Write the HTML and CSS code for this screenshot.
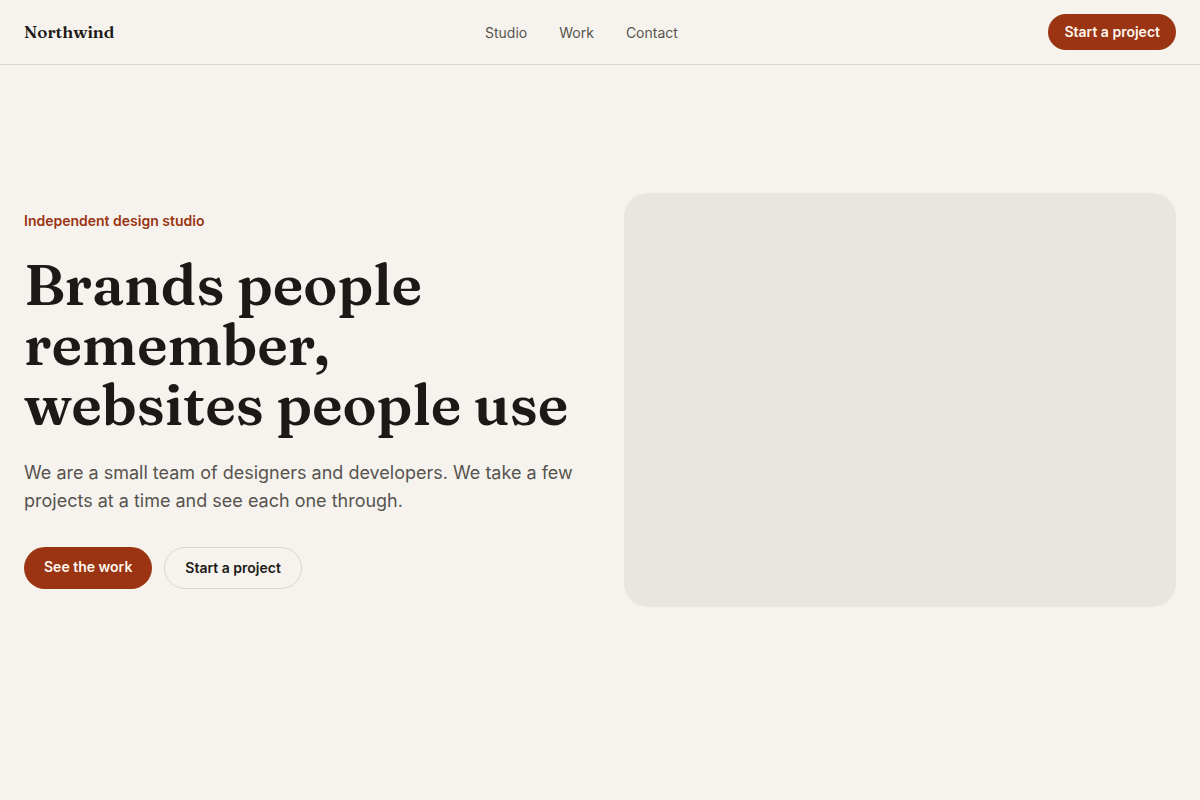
FILE: index.html
```html
<!DOCTYPE html>
<html lang="en">
<head>
<meta charset="utf-8">
<meta name="viewport" content="width=device-width, initial-scale=1">
<title>Northwind</title>
<link rel="stylesheet" href="styles.css">
</head>
<body>
<header class="header">
  <a class="brand" href="#">Northwind</a>
  <nav aria-label="Main">
    <ul class="nav">
      <li><a class="nav-link" href="#studio">Studio</a></li>
      <li><a class="nav-link" href="#work">Work</a></li>
      <li><a class="nav-link" href="#contact">Contact</a></li>
    </ul>
  </nav>
  <a class="button button-primary button-small" href="#contact">Start a project</a>
</header>
<main class="hero">
  <div class="copy">
    <p class="eyebrow">Independent design studio</p>
    <h1 class="title">Brands people remember, websites people use</h1>
    <p class="lead">We are a small team of designers and developers. We take a few projects at a time and see each one through.</p>
    <div class="actions">
      <a class="button button-primary" href="#work">See the work</a>
      <a class="button button-outline" href="#contact">Start a project</a>
    </div>
  </div>
  <div class="media"></div>
</main>
</body>
</html>
```
FILE: styles.css
```css
*, *::before, *::after { box-sizing: border-box; }

body {
  margin: 0;
  background: #f6f3ee;
  color: #1c1917;
  font-family: Inter, sans-serif;
  font-size: 16px;
  line-height: 24px;
}

a { color: inherit; text-decoration: none; }
h1, p, ul { margin: 0; }

.header {
  display: flex;
  align-items: center;
  justify-content: space-between;
  padding: 14px 24px;
  border-bottom: 1px solid #ddd6c8;
}

.brand {
  font-family: Fraunces, "Liberation Serif", serif;
  font-size: 17px;
  font-weight: 600;
}

.nav {
  display: flex;
  gap: 32px;
  padding: 0;
  list-style: none;
}

.nav-link {
  color: #57534e;
  font-size: 14px;
}

.button {
  display: block;
  padding: 10px 20px;
  border-radius: 999px;
  font-size: 14px;
  font-weight: 600;
  line-height: 20px;
}

.button-primary { background: #9a3412; color: #fff7ed; }
.button-small { padding: 8px 16px; }
.button-outline { border: 1px solid #ddd6c8; }

.hero {
  display: grid;
  grid-template-columns: 1fr 1fr;
  gap: 48px;
  align-items: center;
  padding: 128px 24px;
}

.eyebrow {
  color: #9a3412;
  font-size: 14px;
  font-weight: 600;
  line-height: 20px;
}

.title {
  margin-top: 24px;
  font-family: Fraunces, "Liberation Serif", serif;
  font-size: 57px;
  font-weight: 600;
  line-height: 60px;
}

.lead {
  margin-top: 24px;
  color: #57534e;
  font-size: 18px;
  line-height: 28px;
}

.actions { display: flex; gap: 12px; margin-top: 32px; }

.media {
  aspect-ratio: 4 / 3;
  border-radius: 24px;
  background: #e9e6e1;
}
```
